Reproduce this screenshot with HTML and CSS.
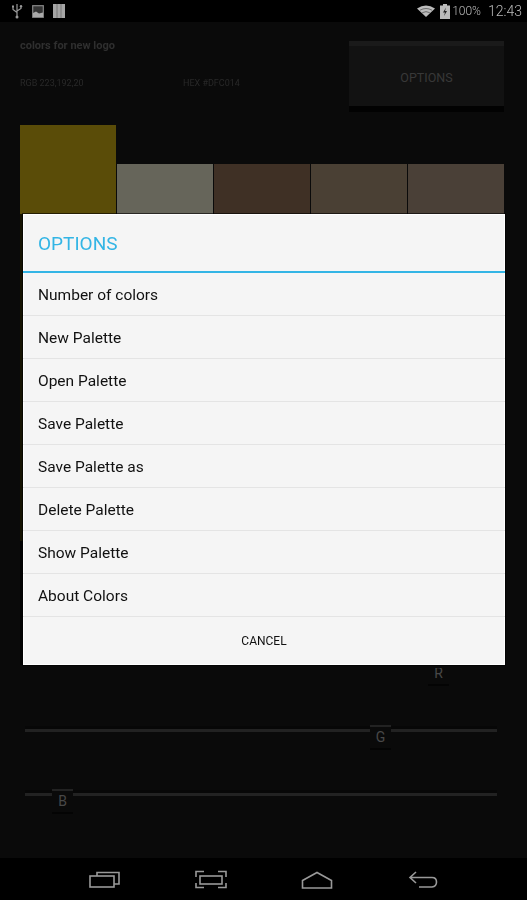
FILE: index.html
```html
<!DOCTYPE html>
<html lang="en">
<head>
    <meta charset="UTF-8">
    <meta name="viewport" content="width=device-width, initial-scale=1.0">
    <title>Colors</title>
    <link rel="stylesheet" href="styles.css">
</head>
<body>
    <div class="status-bar">
        <div class="status-left">
            <svg class="icon" width="12" height="16" viewBox="0 0 12 16">
                <path d="M6 1v13M2 4v2.500l4 3M10 4v1.500L6 8" fill="none" stroke="#999" stroke-width="1.200"/>
                <circle cx="6" cy="14" r="1.500" fill="#999"/>
                <rect x="1" y="2.500" width="2" height="2" fill="#999"/>
                <circle cx="10" cy="3.200" r="1.200" fill="#999"/>
            </svg>
            <svg class="icon" width="12" height="13" viewBox="0 0 12 13">
                <rect x="0.700" y="0.700" width="10.600" height="11.600" fill="#333" stroke="#888" stroke-width="1.200"/>
                <path d="M1 8l3-1.500 3 2 4-1v4.500H1z" fill="#aaa"/>
            </svg>
            <svg class="icon" width="12" height="14" viewBox="0 0 12 14">
                <rect width="12" height="14" fill="#a5a5a5"/>
                <path d="M4 0v14M8 0v14" stroke="#777" stroke-width="1"/>
            </svg>
        </div>
        <div class="status-right">
            <svg class="icon" width="18" height="12" viewBox="0 0 18 12">
                <path d="M0 3.500Q9 -2.500 18 3.500L9 12z" fill="#bbb"/>
                <path d="M3 5.200Q9 1.800 15 5.200M5.200 7.700Q9 5.600 12.800 7.700" fill="none" stroke="#555" stroke-width="0.800"/>
            </svg>
            <svg class="icon battery" width="10" height="15" viewBox="0 0 10 15">
                <path d="M3 0h4v1.500h3V15H0V1.500h3z" fill="#bbb"/>
                <path d="M6 3.500L3 8.500h2L4 12l3-5H5z" fill="#222"/>
            </svg>
            <span class="battery-text">100%</span>
            <span class="clock">12:43</span>
        </div>
    </div>

    <div class="app">
        <div class="app-head">
            <div class="palette-info">
                <div class="palette-name">colors for new logo</div>
                <div class="color-values">
                    <span class="rgb-value">RGB 223,192,20</span>
                    <span>HEX #DFC014</span>
                </div>
            </div>
            <div class="options-btn">OPTIONS</div>
        </div>

        <div class="swatches">
            <div class="swatch swatch-selected"></div>
            <div class="swatch swatch-2"></div>
            <div class="swatch swatch-3"></div>
            <div class="swatch swatch-4"></div>
            <div class="swatch swatch-5"></div>
        </div>

        <div class="sliders">
            <div class="slider"><span class="thumb" style="left: 403px">R</span></div>
            <div class="slider"><span class="thumb" style="left: 345px">G</span></div>
            <div class="slider"><span class="thumb" style="left: 27px">B</span></div>
        </div>

        <!-- Options dialog sits over the dimmed app -->
        <div class="dialog">
            <div class="dialog-title">OPTIONS</div>
            <div class="dialog-item">Number of colors</div>
            <div class="dialog-item">New Palette</div>
            <div class="dialog-item">Open Palette</div>
            <div class="dialog-item">Save Palette</div>
            <div class="dialog-item">Save Palette as</div>
            <div class="dialog-item">Delete Palette</div>
            <div class="dialog-item">Show Palette</div>
            <div class="dialog-item">About Colors</div>
            <div class="dialog-cancel">CANCEL</div>
        </div>
    </div>

    <div class="nav-bar">
        <div class="nav-slot">
            <svg width="32" height="17" viewBox="0 0 32 17" fill="none" stroke="#999" stroke-width="1.600">
                <rect x="1" y="5" width="24" height="11"/>
                <path d="M8 5V1.500H30V13H25"/>
            </svg>
        </div>
        <div class="nav-slot">
            <svg width="32" height="19" viewBox="0 0 32 19" fill="none" stroke="#999" stroke-width="1.600">
                <rect x="5" y="6" width="22" height="8"/>
                <path d="M1 7V1.500H9M23 1.500H31V7M1 13v4.500H9M23 17.500H31V13"/>
            </svg>
        </div>
        <div class="nav-slot">
            <svg width="32" height="18" viewBox="0 0 32 18" fill="none" stroke="#999" stroke-width="1.600">
                <path d="M1.500 17V9.500L16 1.500l14.500 8V17z"/>
            </svg>
        </div>
        <div class="nav-slot">
            <svg width="30" height="17" viewBox="0 0 30 17" fill="none" stroke="#999" stroke-width="1.600">
                <path d="M8 1L2 6.500l6 5.500M2 6.500h22q4.500 0 4.500 4.500t-4.500 5H11"/>
            </svg>
        </div>
    </div>
</body>
</html>
```
FILE: styles.css
```css
body {
    margin: 0;
    width: 527px;
    height: 900px;
    display: flex;
    flex-direction: column;
    overflow: hidden;
    background-color: #000;
    font-family: Roboto, "Liberation Sans", sans-serif;
}

/* Status bar */
.status-bar {
    height: 22px;
    flex-shrink: 0;
    display: flex;
    justify-content: space-between;
    align-items: center;
    padding: 0 5px 0 11px;
    background-color: #000;
    filter: blur(0.4px);
}

.status-left, .status-right {
    display: flex;
    align-items: center;
}

.status-left {
    gap: 9px;
}

.icon {
    display: block;
}

.battery {
    margin-left: 5px;
}

.battery-text {
    margin-left: 2px;
    font-size: 12px;
    font-weight: 300;
    color: #bbb;
}

.clock {
    margin-left: 7px;
    font-size: 14px;
    font-weight: 300;
    color: #bbb;
}

/* Dimmed app */
.app {
    flex: 1;
    position: relative;
    background-color: #0a0a0a;
}

.app-head {
    display: flex;
    justify-content: space-between;
    padding: 19px 23px 0 20px;
}

.palette-info {
    filter: blur(0.4px);
}

.palette-name {
    margin-top: -2px;
    font-size: 11px;
    font-weight: 700;
    line-height: 14px;
    color: #2f2f2f;
}

.color-values {
    display: flex;
    margin-top: 24px;
    font-size: 9px;
    line-height: 12px;
    color: #292929;
}

.rgb-value {
    width: 163px;
}

.options-btn {
    box-sizing: border-box;
    width: 155px;
    height: 65px;
    padding-top: 2px;
    display: flex;
    align-items: center;
    justify-content: center;
    background-color: #121212;
    border-top: 5px solid #1a1a1a;
    box-shadow: 0 6px 0 #020202;
    font-size: 12.500px;
    color: #383838;
}

.swatches {
    display: flex;
    gap: 1px;
    margin: 19px 0 0 20px;
}

.swatch {
    width: 96px;
    height: 377px;
    margin-top: 39px;
}

.swatch-selected {
    height: 416px;
    margin-top: 0;
    background-color: #5a4c08;
}

.swatch-2 {
    background-color: #66655a;
}

.swatch-3 {
    background-color: #3f3025;
}

.swatch-4 {
    background-color: #4a4034;
}

.swatch-5 {
    background-color: #4a4037;
}

/* R G B sliders */
.sliders {
    margin: 124px 0 0 25px;
    width: 472px;
}

.slider {
    position: relative;
    height: 3px;
    margin-bottom: 61px;
    background-color: #222;
    box-shadow: 0 -3px 0 #070707;
}

.thumb {
    box-sizing: border-box;
    position: absolute;
    top: -4px;
    width: 21px;
    height: 23px;
    padding-bottom: 1px;
    display: flex;
    align-items: center;
    justify-content: center;
    background-color: #0a0a0a;
    border-top: 2px solid #222;
    box-shadow: 0 2px 0 #040404;
    font-size: 14px;
    color: #484848;
}

/* Options dialog */
.dialog {
    position: absolute;
    top: 192px;
    left: 23px;
    width: 482px;
    background-color: #f5f5f5;
    box-shadow: inset 0 0 0 1px #fff, 0 0 0 1px rgba(0, 0, 0, 0.6), -3px 0 0 rgba(0, 0, 0, 0.75), 0 3px 0 #0a0a0a;
    filter: blur(0.3px);
}

.dialog-title {
    box-sizing: border-box;
    height: 59px;
    padding: 2px 0 0 15px;
    display: flex;
    align-items: center;
    border-bottom: 2px solid #33b5e5;
    font-size: 19px;
    color: #33b5e5;
}

.dialog-item {
    height: 43px;
    box-sizing: border-box;
    padding: 2px 0 0 15px;
    display: flex;
    align-items: center;
    border-bottom: 1px solid #e4e4e4;
    font-size: 15.500px;
    color: #111;
}

.dialog-cancel {
    height: 48px;
    display: flex;
    align-items: center;
    justify-content: center;
    font-size: 12px;
    color: #111;
}

/* Bottom nav */
.nav-bar {
    height: 42px;
    flex-shrink: 0;
    display: flex;
    justify-content: center;
    align-items: center;
    background-color: #000;
    filter: blur(0.4px);
}

.nav-slot {
    width: 106px;
    display: flex;
    justify-content: center;
    margin-top: 1px;
}
```
